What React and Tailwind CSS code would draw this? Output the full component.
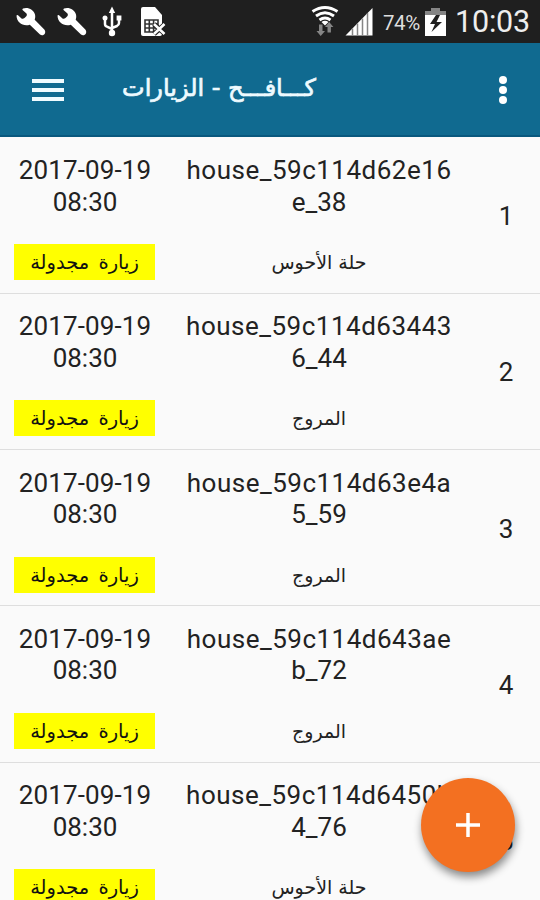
import React from "react";

const visits = [
  { n: "1", id: ["house_59c114d62e16", "e_38"], place: "حلة الأحوس" },
  { n: "2", id: ["house_59c114d63443", "6_44"], place: "المروج" },
  { n: "3", id: ["house_59c114d63e4a", "5_59"], place: "المروج" },
  { n: "4", id: ["house_59c114d643ae", "b_72"], place: "المروج" },
  { n: "5", id: ["house_59c114d6450b", "4_76"], place: "حلة الأحوس" },
];

function Wrench() {
  return (
    <svg className="h-[32px] w-[32px] shrink-0" viewBox="0 0 32 32" fill="#fff">
      <path d="M1.500 9.500Q2 8.500 3 9.300L6.500 12.500Q8 13.300 9.500 12L11.300 10.300Q12.500 9 11.500 7.500L7.500 4Q7 3 8 2.500C13 .8 18.500 3.500 20 8.500C20.500 10.500 20.200 12.200 19.700 13.800L29.300 23.500C32 26.800 28.300 31 25 28.600L14.800 18.700C8.500 21 1.500 16.500 1.500 9.500Z" />
    </svg>
  );
}

function Usb() {
  return (
    <svg className="h-[32px] w-[20px] shrink-0" viewBox="0 0 20 32" fill="none" stroke="#fff" strokeWidth="2.500">
      <path d="M10 5v22M3 12v6q0 2 2 2.600L10 23M17 12v5q0 2-2 3l-5 2" />
      <path d="M10 .5l3.200 6.500H6.800z" fill="#fff" stroke="none" />
      <circle cx="3" cy="12" r="2.500" fill="#fff" stroke="none" />
      <path d="M14.600 9.500h4.800v5h-4.800z" fill="#fff" stroke="none" />
      <circle cx="10" cy="27" r="3.200" fill="#fff" stroke="none" />
    </svg>
  );
}

function SimError() {
  return (
    <svg className="h-[32px] w-[27px] shrink-0" viewBox="0 0 27 32">
      <path d="M1 3q0-2 2-2h12l7 8v19q0 2-2 2H3q-2 0-2-2z" fill="#fff" />
      <path d="M5 14h13v12H5zM5 18h13M5 22h13M9.300 14v12M13.600 14v12" fill="none" stroke="#333" strokeWidth="1.600" />
      <path d="M14 18l11 10M25 18L14 28" stroke="#1f1f1f" strokeWidth="5" />
      <path d="M14 18l10.500 10M24.500 18L14 28" stroke="#fff" strokeWidth="2.600" />
    </svg>
  );
}

function Wifi() {
  return (
    <svg className="h-[32px] w-[28px] shrink-0" viewBox="0 0 28 32" fill="none" stroke="#fff" strokeWidth="2.900">
      <path d="M1.500 6.500q12.500-8 25 0M5 11q9-6.500 18 0M8.500 15q5.500-4 11 0" />
      <path d="M10.500 17q3.500-2.500 7 0L14 20.500z" fill="#fff" stroke="none" />
      <path d="M8 19.500h3.500V26H14l-4.300 5-4.200-5H8zM16.500 27.500V22H14l4.200-5 4.200 5h-2.500v5.500z" fill="#858585" stroke="none" />
    </svg>
  );
}

function Signal() {
  return (
    <svg className="h-[28px] w-[28px] shrink-0" viewBox="0 0 28 28">
      <path d="M.5 27.500L27.500 0v27.500z" fill="#fff" />
      <path d="M7.500 20.500v7M12.500 15.500v12M17.500 10.500v17M22.500 5v22.500" stroke="#858585" strokeWidth="1.500" />
    </svg>
  );
}

function Battery() {
  return (
    <svg className="h-[29px] w-[21px] shrink-0" viewBox="0 0 21 29">
      <path d="M0 3h6V0h9v3h6v4H0z" fill="#858585" />
      <path d="M0 7h21v21H0z" fill="#fff" />
      <path d="M11 7L5 16h5l-3.500 8L17 14h-5.500L15 7z" fill="#1f1f1f" />
    </svg>
  );
}

function StatusBar() {
  return (
    <header className="flex h-[43px] shrink-0 items-center bg-[#1f1f1f] pl-[15px] pt-[1px] font-[Roboto,sans-serif] text-[#eee]">
      <Wrench />
      <div className="ml-[9px] flex"><Wrench /></div>
      <div className="ml-[14px] flex"><Usb /></div>
      <div className="ml-[18px] flex"><SimError /></div>
      <div className="ml-[144px] mt-[-2px] flex"><Wifi /></div>
      <div className="ml-[6px] flex"><Signal /></div>
      <div className="ml-[10px] w-[37px] whitespace-nowrap pt-[2px] text-[20.500px] tracking-[-0.400px] text-[#ddd]">74%</div>
      <div className="ml-[5px] flex"><Battery /></div>
      <div className="ml-[9px] whitespace-nowrap text-[30.500px] tracking-[-0.200px]">10:03</div>
    </header>
  );
}

function AppBar() {
  return (
    <nav className="flex h-[94px] shrink-0 items-center border-b-2 border-[#09587e] bg-[#106a90] pl-[32px]">
      <div className="flex w-[32px] flex-col gap-[5px] pt-[2px]">
        <div className="h-[4px] bg-[#f0fbff]" />
        <div className="h-[4px] bg-[#f0fbff]" />
        <div className="h-[4px] bg-[#f0fbff]" />
      </div>
      <div className="ml-[58px] flex w-[194px] justify-center">
        <h1 dir="rtl" className="whitespace-nowrap pb-[2px] font-['DejaVu_Sans',sans-serif] text-[24px] text-[#eefaff] [-webkit-text-stroke:0.700px_#eefaff]">كـــافـــح - الزيارات</h1>
      </div>
      <div className="ml-[183px] flex flex-col gap-[2px] pt-[2px]">
        <div className="h-[8px] w-[8px] rounded-full bg-white" />
        <div className="h-[8px] w-[8px] rounded-full bg-white" />
        <div className="h-[8px] w-[8px] rounded-full bg-white" />
      </div>
    </nav>
  );
}

function VisitRow({ visit }) {
  return (
    <li className="flex h-[156.300px] shrink-0 border-b border-[#dedede] pt-[17.500px] text-center text-[26px] leading-[31.500px] text-[#222]">
      <div className="ml-[14px] w-[142px]">
        <div className="tracking-[0.100px]">2017-09-19</div>
        <div>08:30</div>
        <div dir="rtl" className="mt-[26px] h-[36px] w-[141px] whitespace-nowrap bg-[#ffff00] font-['DejaVu_Sans',sans-serif] text-[19.500px] leading-[38px] text-[#111] [word-spacing:3px]">زيارة مجدولة</div>
      </div>
      <div className="ml-[23px] w-[280px]">
        <div className="whitespace-nowrap tracking-[0.500px]">{visit.id[0]}</div>
        <div>{visit.id[1]}</div>
        <div dir="rtl" className="mt-[26px] font-['DejaVu_Sans',sans-serif] text-[19px] leading-[36px]">{visit.place}</div>
      </div>
      <div className="ml-[31px] w-[32px] pt-[46px]">{visit.n}</div>
    </li>
  );
}

export default function App() {
  return (
    <div className="relative flex h-[900px] w-[540px] flex-col overflow-hidden bg-[#fafafa] font-[Roboto,sans-serif]">
      <StatusBar />
      <AppBar />
      <ul className="flex min-h-0 flex-1 flex-col overflow-hidden pt-[0.500px]">
        {visits.map((visit) => <VisitRow key={visit.n} visit={visit} />)}
      </ul>
      <button className="absolute left-[421px] top-[778px] flex h-[94px] w-[94px] items-center justify-center rounded-full bg-[#f37021] shadow-[1px_5px_8px_rgba(0,0,0,0.45)]">
        <svg className="h-[24px] w-[24px]" viewBox="0 0 24 24" fill="none" stroke="#fff" strokeWidth="3.500">
          <path d="M12 0v24M0 12h24" />
        </svg>
      </button>
    </div>
  );
}
